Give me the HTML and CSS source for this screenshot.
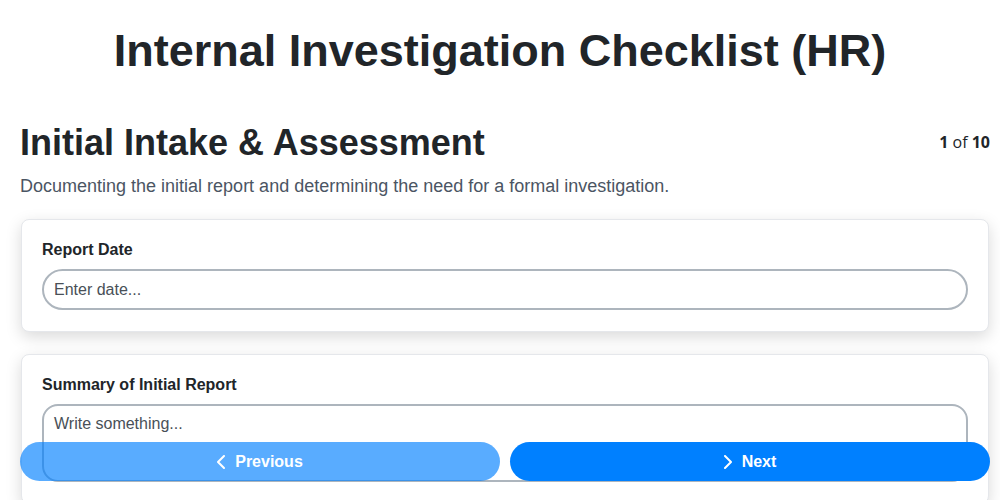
FILE: index.html
```html
<!DOCTYPE html>
<html lang="en">
<head>
<meta charset="utf-8">
<title>Internal Investigation Checklist (HR)</title>
<link rel="stylesheet" href="styles.css">
</head>
<body>
<h1 class="page-title">Internal Investigation Checklist (HR)</h1>
<main class="wrap">
  <header class="section-head">
    <h2 class="section-title">Initial Intake &amp; Assessment</h2>
    <div class="pager"><b>1</b> of <b>10</b></div>
  </header>
  <p class="section-desc">Documenting the initial report and determining the need for a formal investigation.</p>

  <section class="card">
    <label class="field-label" for="f1">Report Date</label>
    <input class="input" id="f1" type="text" placeholder="Enter date...">
  </section>

  <section class="card">
    <label class="field-label" for="f2">Summary of Initial Report</label>
    <textarea class="textarea" id="f2" placeholder="Write something..."></textarea>
  </section>
</main>

<nav class="nav">
  <button class="btn btn-prev" type="button">
    <svg width="8" height="14" viewBox="0 0 8 14" fill="none" stroke="#fff" stroke-width="2" stroke-linecap="round" stroke-linejoin="round"><path d="M7 1 L1 7 L7 13"/></svg>
    Previous
  </button>
  <button class="btn btn-next" type="button">
    <svg width="8" height="14" viewBox="0 0 8 14" fill="none" stroke="#fff" stroke-width="2" stroke-linecap="round" stroke-linejoin="round"><path d="M1 1 L7 7 L1 13"/></svg>
    Next
  </button>
</nav>
</body>
</html>
```

FILE: styles.css
```css
* { box-sizing: border-box; }
html, body { margin: 0; padding: 0; background: #fff; }
body {
  font-family: "Liberation Sans", Arial, sans-serif;
  color: #212529;
  height: 500px;
  overflow: hidden;
}
.page-title {
  margin: 0;
  padding-top: 25px;
  text-align: center;
  font-size: 45px;
  line-height: 52px;
  font-weight: 700;
  color: #212529;
}
.wrap {
  margin: 0 10px 0 20px;
  padding-top: 44px;
}
.section-head {
  display: flex;
  justify-content: space-between;
  align-items: flex-start;
}
.section-title {
  margin: 0;
  font-size: 36px;
  line-height: 44px;
  font-weight: 700;
  color: #212529;
}
.pager {
  font-family: "Open Sans", sans-serif;
  font-size: 16px;
  line-height: 22px;
  padding-top: 10px;
  color: #212529;
}
.section-desc {
  margin: 10px 0 22px;
  font-size: 18px;
  line-height: 22px;
  color: #4b5563;
}
.card {
  background: #fff;
  border: 1px solid #e5e7eb;
  border-radius: 8px;
  box-shadow: 0 5px 16px rgba(0,0,0,0.15);
  padding: 20px 20px 21px;
  margin: 0 1px 22px 1px;
  display: flex;
  flex-direction: column;
}
.field-label {
  font-size: 16px;
  line-height: 20px;
  font-weight: 700;
  color: #212529;
  margin-bottom: 9px;
}
.input, .textarea {
  font-family: "Liberation Sans", Arial, sans-serif;
  font-size: 16px;
  color: #212529;
  border: 2px solid #adb5bd;
  background: #fff;
  outline: none;
  padding: 0 10px;
}
.input {
  height: 41px;
  border-radius: 21px;
}
.textarea {
  height: 78px;
  border-radius: 16px;
  padding-top: 9px;
  resize: none;
}
.input::placeholder, .textarea::placeholder { color: #495057; opacity: 1; }
.nav {
  position: fixed;
  left: 20px;
  width: 970px;
  top: 442px;
  display: flex;
  gap: 10px;
}
.btn {
  flex: 1;
  height: 39px;
  border: none;
  border-radius: 20px;
  background: #0080ff;
  color: #fff;
  font-family: "Liberation Sans", Arial, sans-serif;
  font-size: 16px;
  font-weight: 700;
  display: flex;
  align-items: center;
  justify-content: center;
  gap: 10px;
}
.btn-prev { opacity: 0.65; }
```
